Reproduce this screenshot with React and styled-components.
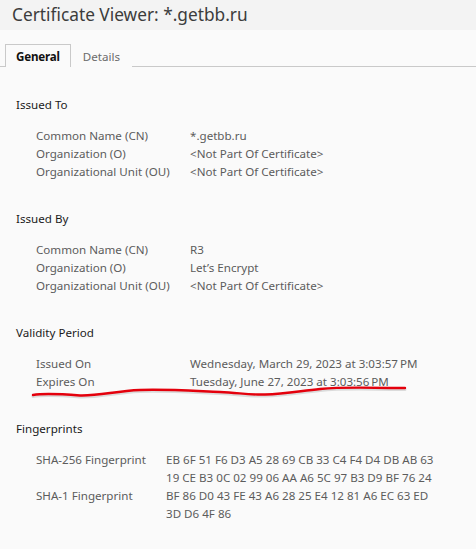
import React from "react";
import styled, { createGlobalStyle } from "styled-components";

const GlobalStyle = createGlobalStyle`
  html, body {
    margin: 0;
    padding: 0;
    background: #fafafa;
  }
  body {
    font-family: "Noto Sans", "DejaVu Sans", sans-serif;
    -webkit-font-smoothing: antialiased;
  }
`;

const Window = styled.div`
  width: 476px;
  height: 549px;
  background: #fafafa;
  position: relative;
  overflow: hidden;
`;

const TitleBar = styled.div`
  height: 30px;
  line-height: 30px;
  padding-left: 12px;
  background: #f3f3f3;
  color: #3c3c3c;
  font-size: 17.3px;
`;

const TabStrip = styled.div`
  display: flex;
  margin-top: 14px;
  padding-left: 5px;
  border-bottom: 1px solid #c9c9c9;
  height: 22px;
`;

const Tab = styled.div`
  padding: 0 ${(p) => (p.$active ? 10 : 11)}px;
  line-height: 23px;
  font-size: 11.6px;
  margin-bottom: -1px;
  color: ${(p) => (p.$active ? "#111" : "#6b6b6b")};
  font-weight: ${(p) => (p.$active ? 700 : 400)};
  letter-spacing: ${(p) => (p.$active ? "-0.2px" : "0")};
  background: #fafafa;
  border: 1px solid ${(p) => (p.$active ? "#c9c9c9" : "transparent")};
  border-bottom: none;
  height: 22px;
`;

const Content = styled.div`
  padding: 29px 0 0 16px;
  display: flex;
  flex-direction: column;
  gap: 29px;
`;

const Section = styled.section`
  display: flex;
  flex-direction: column;
  gap: 13px;
`;

const Heading = styled.div`
  font-size: 11.6px;
  line-height: 18px;
  color: #1a1a1a;
`;

const Fields = styled.div`
  display: grid;
  grid-template-columns: ${(p) => p.$labelWidth}px auto;
  padding-left: 20px;
  font-size: 11.6px;
  line-height: 18px;
  color: #5c5c5c;
`;

const Label = styled.div`
  white-space: nowrap;
`;

const Value = styled.div`
  white-space: pre-line;
`;

const Squiggle = styled.svg`
  position: absolute;
  left: 0;
  top: 380px;
  pointer-events: none;
`;

const sections = [
  {
    title: "Issued To",
    labelWidth: 154,
    rows: [
      ["Common Name (CN)", "*.getbb.ru"],
      ["Organization (O)", "<Not Part Of Certificate>"],
      ["Organizational Unit (OU)", "<Not Part Of Certificate>"],
    ],
  },
  {
    title: "Issued By",
    labelWidth: 154,
    rows: [
      ["Common Name (CN)", "R3"],
      ["Organization (O)", "Let\u2019s Encrypt"],
      ["Organizational Unit (OU)", "<Not Part Of Certificate>"],
    ],
  },
  {
    title: "Validity Period",
    labelWidth: 154,
    rows: [
      ["Issued On", "Wednesday, March 29, 2023 at 3:03:57\u2009PM"],
      ["Expires On", "Tuesday, June 27, 2023 at 3:03:56\u2009PM"],
    ],
  },
  {
    title: "Fingerprints",
    labelWidth: 130,
    rows: [
      [
        "SHA-256 Fingerprint",
        "EB 6F 51 F6 D3 A5 28 69 CB 33 C4 F4 D4 DB AB 63\n19 CE B3 0C 02 99 06 AA A6 5C 97 B3 D9 BF 76 24",
      ],
      [
        "SHA-1 Fingerprint",
        "BF 86 D0 43 FE 43 A6 28 25 E4 12 81 A6 EC 63 ED\n3D D6 4F 86",
      ],
    ],
  },
];

const underline =
  "M33 395 C45 393 60 394 80 395.5 C100 396 115 391 140 390 C165 389 195 391 220 392 C240 393 250 395 265 394.5 C285 394 300 391 320 389 C340 387 370 387.5 390 388 L405 388";

export default function App() {
  return (
    <Window>
      <GlobalStyle />
      <TitleBar>Certificate Viewer: *.getbb.ru</TitleBar>
      <TabStrip>
        <Tab $active>General</Tab>
        <Tab>Details</Tab>
      </TabStrip>
      <Content>
        {sections.map((s) => (
          <Section key={s.title}>
            <Heading>{s.title}</Heading>
            <Fields $labelWidth={s.labelWidth}>
              {s.rows.map(([label, value]) => (
                <React.Fragment key={label}>
                  <Label>{label}</Label>
                  <Value>{value}</Value>
                </React.Fragment>
              ))}
            </Fields>
          </Section>
        ))}
      </Content>
      {/* hand-drawn red underline under the expiry row */}
      <Squiggle width="476" height="24" viewBox="0 380 476 24">
        <path
          d={underline}
          fill="none"
          stroke="rgba(0,0,0,0.12)"
          strokeWidth="3"
          strokeLinecap="round"
          transform="translate(0 1.5)"
        />
        <path
          d={underline}
          fill="none"
          stroke="#e4000c"
          strokeWidth="2.4"
          strokeLinecap="round"
        />
      </Squiggle>
    </Window>
  );
}
